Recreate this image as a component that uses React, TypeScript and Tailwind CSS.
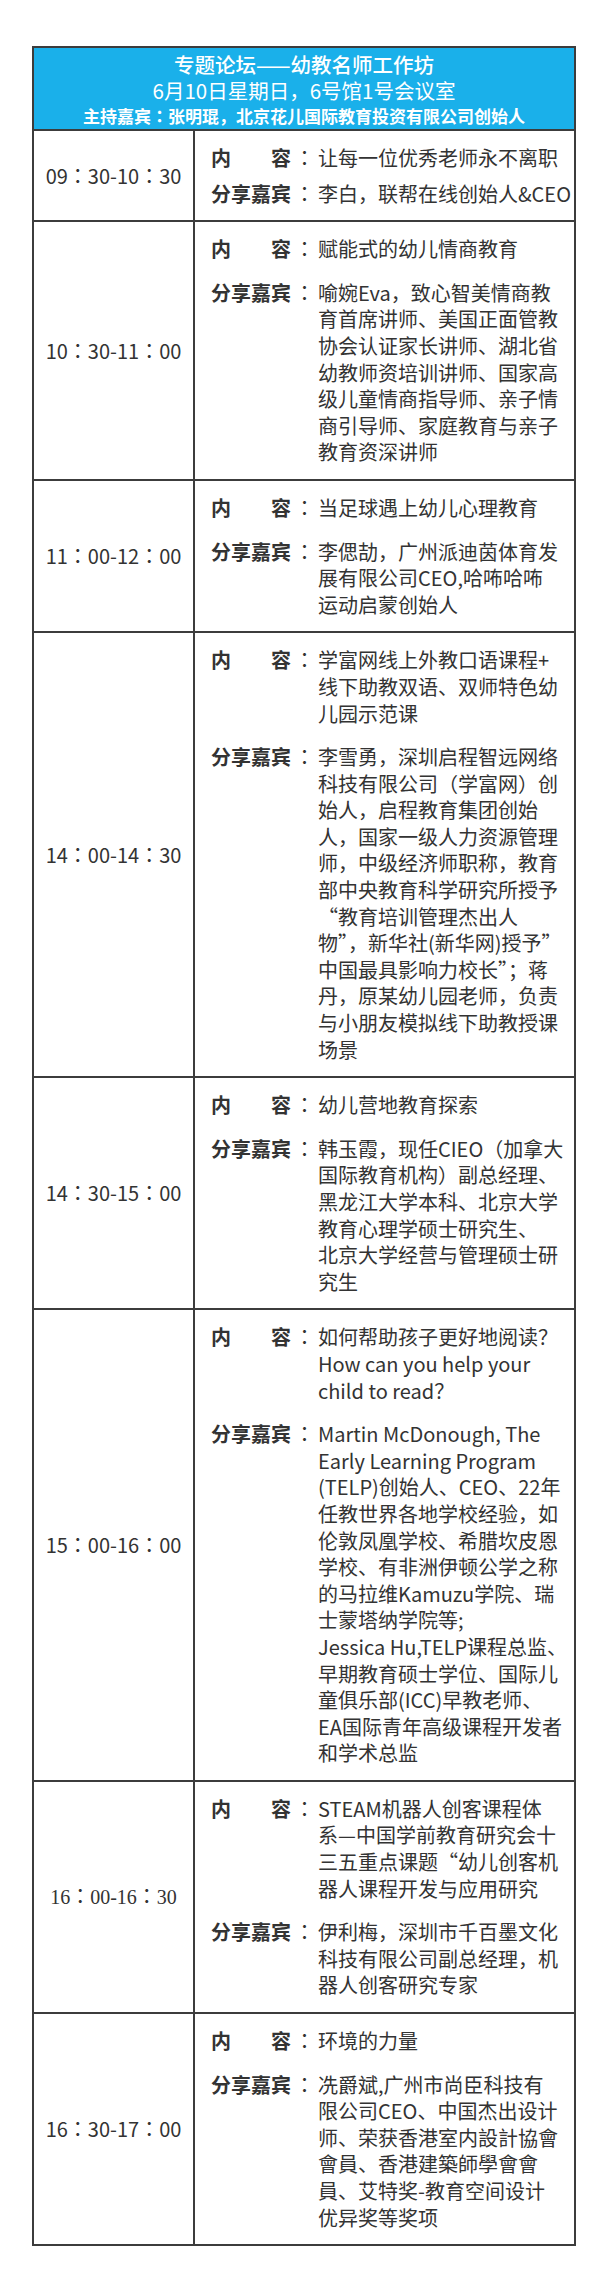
import React from 'react'

type Session = {
  time: string
  serifTime?: boolean
  topic: string[]
  guest: string[]
  compact?: boolean
}

const sessions: Session[] = [
  {
    time: '09：30-10：30',
    topic: ['让每一位优秀老师永不离职'],
    guest: ['李白，联帮在线创始人&CEO'],
    compact: true,
  },
  {
    time: '10：30-11：00',
    topic: ['赋能式的幼儿情商教育'],
    guest: [
      '喻婉Eva，致心智美情商教',
      '育首席讲师、美国正面管教',
      '协会认证家长讲师、湖北省',
      '幼教师资培训讲师、国家高',
      '级儿童情商指导师、亲子情',
      '商引导师、家庭教育与亲子',
      '教育资深讲师',
    ],
  },
  {
    time: '11：00-12：00',
    topic: ['当足球遇上幼儿心理教育'],
    guest: ['李偲劼，广州派迪茵体育发', '展有限公司CEO,哈咘哈咘', '运动启蒙创始人'],
  },
  {
    time: '14：00-14：30',
    topic: ['学富网线上外教口语课程+', '线下助教双语、双师特色幼', '儿园示范课'],
    guest: [
      '李雪勇，深圳启程智远网络',
      '科技有限公司（学富网）创',
      '始人，启程教育集团创始',
      '人，国家一级人力资源管理',
      '师，中级经济师职称，教育',
      '部中央教育科学研究所授予',
      '“教育培训管理杰出人',
      '物”，新华社(新华网)授予”',
      '中国最具影响力校长”；蒋',
      '丹，原某幼儿园老师，负责',
      '与小朋友模拟线下助教授课',
      '场景',
    ],
  },
  {
    time: '14：30-15：00',
    topic: ['幼儿营地教育探索'],
    guest: [
      '韩玉霞，现任CIEO（加拿大',
      '国际教育机构）副总经理、',
      '黑龙江大学本科、北京大学',
      '教育心理学硕士研究生、',
      '北京大学经营与管理硕士研',
      '究生',
    ],
  },
  {
    time: '15：00-16：00',
    topic: ['如何帮助孩子更好地阅读？', 'How can you help your', 'child to read？'],
    guest: [
      'Martin McDonough, The',
      'Early Learning Program',
      '(TELP)创始人、CEO、22年',
      '任教世界各地学校经验，如',
      '伦敦凤凰学校、希腊坎皮恩',
      '学校、有非洲伊顿公学之称',
      '的马拉维Kamuzu学院、瑞',
      '士蒙塔纳学院等;',
      'Jessica Hu,TELP课程总监、',
      '早期教育硕士学位、国际儿',
      '童俱乐部(ICC)早教老师、',
      'EA国际青年高级课程开发者',
      '和学术总监',
    ],
  },
  {
    time: '16：00-16：30',
    serifTime: true,
    topic: ['STEAM机器人创客课程体', '系—中国学前教育研究会十', '三五重点课题“幼儿创客机', '器人课程开发与应用研究'],
    guest: ['伊利梅，深圳市千百墨文化', '科技有限公司副总经理，机', '器人创客研究专家'],
  },
  {
    time: '16：30-17：00',
    topic: ['环境的力量'],
    guest: [
      '冼爵斌,广州市尚臣科技有',
      '限公司CEO、中国杰出设计',
      '师、荣获香港室内設計協會',
      '會員、香港建築師學會會',
      '員、艾特奖-教育空间设计',
      '优异奖等奖项',
    ],
  },
]

const jpColon = { fontFamily: '"Noto Sans CJK JP", sans-serif' }

// time strings use a centred full-width colon
function TimeText({ text }: { text: string }) {
  const parts = text.split('：')
  return (
    <span>
      {parts.map((p, i) => (
        <React.Fragment key={i}>
          {i > 0 && <span style={jpColon}>：</span>}
          {p}
        </React.Fragment>
      ))}
    </span>
  )
}

function Entry({ label, lines }: { label: React.ReactNode; lines: string[] }) {
  return (
    <div className="flex">
      <div className="w-[80px] shrink-0 font-bold">{label}</div>
      <div className="w-[27px] shrink-0 text-center" style={jpColon}>
        ：
      </div>
      <div className="whitespace-nowrap">
        {lines.map((line, i) => (
          <div key={i}>{line}</div>
        ))}
      </div>
    </div>
  )
}

export default function App() {
  return (
    <div className="min-h-[2285px] bg-white pt-[46px]">
      <div
        className="ml-[32px] w-[544px] border-2 border-[#3c3c3c] text-[#333]"
        style={{ fontFamily: '"Noto Sans CJK SC", "Noto Sans", sans-serif' }}
      >
        {/* Header */}
        <div className="bg-[#1ab0ea] pt-[3px] pb-[1px] text-center text-white">
          <div className="text-[20.5px] leading-[26px] font-medium">专题论坛——幼教名师工作坊</div>
          <div className="text-[20.5px] leading-[26px]">6月10日星期日，6号馆1号会议室</div>
          <div className="text-[17px] leading-[25px] font-bold">
            主持嘉宾<span style={jpColon}>：</span>张明琨，北京花儿国际教育投资有限公司创始人
          </div>
        </div>

        {/* Sessions */}
        {sessions.map((s) => (
          <div key={s.time} className="grid grid-cols-[161px_1fr] border-t-2 border-[#3c3c3c]">
            <div
              className="flex items-center justify-center border-r-2 border-[#3c3c3c] text-[20px]"
              style={s.serifTime ? { fontFamily: '"Liberation Serif", "Noto Sans CJK SC", serif' } : undefined}
            >
              <TimeText text={s.time} />
            </div>
            <div
              className={`flex flex-col pl-[16px] pt-[14px] pb-[13px] text-[20px] leading-[26.6px] ${
                s.compact ? 'gap-[9px]' : 'gap-[17px]'
              }`}
            >
              <Entry
                label={
                  <div className="flex justify-between">
                    <span>内</span>
                    <span>容</span>
                  </div>
                }
                lines={s.topic}
              />
              <Entry label="分享嘉宾" lines={s.guest} />
            </div>
          </div>
        ))}
      </div>
    </div>
  )
}
